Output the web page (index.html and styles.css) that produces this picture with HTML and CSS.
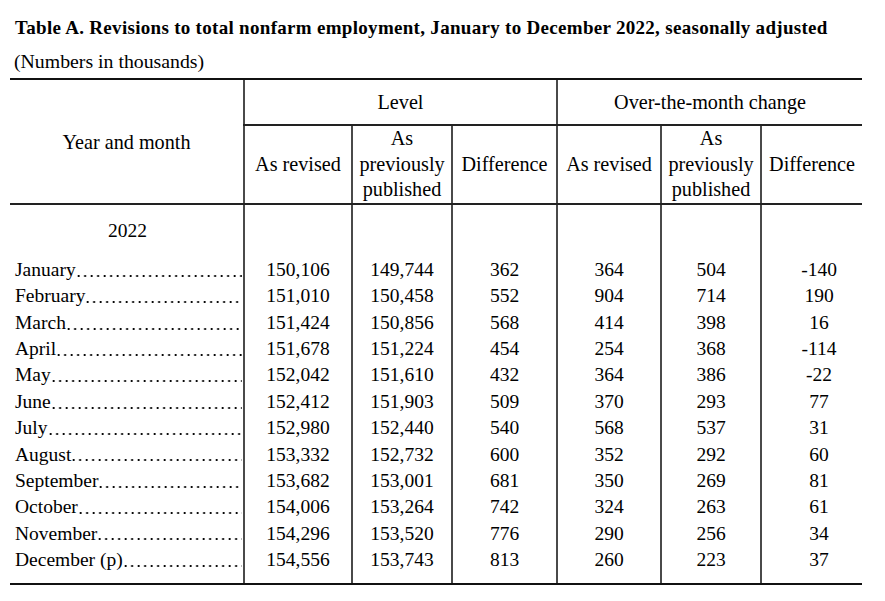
FILE: index.html
```html
<!DOCTYPE html>
<html>
<head>
<meta charset="utf-8">
<link rel="stylesheet" href="styles.css">
</head>
<body>
<div class="page">
  <h1 class="title">Table A. Revisions to total nonfarm employment, January to December 2022, seasonally adjusted</h1>
  <p class="sub">(Numbers in thousands)</p>
  <table class="data">
    <colgroup>
      <col class="c-month"><col class="c-a"><col class="c-b"><col class="c-c"><col class="c-d"><col class="c-e"><col class="c-f">
    </colgroup>
    <thead>
      <tr class="h1">
        <th rowspan="2" class="first ym">Year and month</th>
        <th colspan="3">Level</th>
        <th colspan="3">Over-the-month change</th>
      </tr>
      <tr class="h2">
        <th>As revised</th>
        <th>As<br>previously<br>published</th>
        <th>Difference</th>
        <th>As revised</th>
        <th>As<br>previously<br>published</th>
        <th>Difference</th>
      </tr>
    </thead>
    <tbody>
      <tr class="year"><td class="first yr">2022</td><td></td><td></td><td></td><td></td><td></td><td></td></tr>
      <tr><td class="first"><div class="lead"><span>January</span><span class="dots"></span></div></td><td>150,106</td><td>149,744</td><td>362</td><td>364</td><td>504</td><td class="diff">-140</td></tr>
      <tr><td class="first"><div class="lead"><span>February</span><span class="dots"></span></div></td><td>151,010</td><td>150,458</td><td>552</td><td>904</td><td>714</td><td class="diff">190</td></tr>
      <tr><td class="first"><div class="lead"><span>March</span><span class="dots"></span></div></td><td>151,424</td><td>150,856</td><td>568</td><td>414</td><td>398</td><td class="diff">16</td></tr>
      <tr><td class="first"><div class="lead"><span>April</span><span class="dots"></span></div></td><td>151,678</td><td>151,224</td><td>454</td><td>254</td><td>368</td><td class="diff">-114</td></tr>
      <tr><td class="first"><div class="lead"><span>May</span><span class="dots"></span></div></td><td>152,042</td><td>151,610</td><td>432</td><td>364</td><td>386</td><td class="diff">-22</td></tr>
      <tr><td class="first"><div class="lead"><span>June</span><span class="dots"></span></div></td><td>152,412</td><td>151,903</td><td>509</td><td>370</td><td>293</td><td class="diff">77</td></tr>
      <tr><td class="first"><div class="lead"><span>July</span><span class="dots"></span></div></td><td>152,980</td><td>152,440</td><td>540</td><td>568</td><td>537</td><td class="diff">31</td></tr>
      <tr><td class="first"><div class="lead"><span>August</span><span class="dots"></span></div></td><td>153,332</td><td>152,732</td><td>600</td><td>352</td><td>292</td><td class="diff">60</td></tr>
      <tr><td class="first"><div class="lead"><span>September</span><span class="dots"></span></div></td><td>153,682</td><td>153,001</td><td>681</td><td>350</td><td>269</td><td class="diff">81</td></tr>
      <tr><td class="first"><div class="lead"><span>October</span><span class="dots"></span></div></td><td>154,006</td><td>153,264</td><td>742</td><td>324</td><td>263</td><td class="diff">61</td></tr>
      <tr><td class="first"><div class="lead"><span>November</span><span class="dots"></span></div></td><td>154,296</td><td>153,520</td><td>776</td><td>290</td><td>256</td><td class="diff">34</td></tr>
      <tr class="last"><td class="first"><div class="lead"><span>December (p)</span><span class="dots"></span></div></td><td>154,556</td><td>153,743</td><td>813</td><td>260</td><td>223</td><td class="diff">37</td></tr>
    </tbody>
  </table>
</div>
</body>
</html>
```

FILE: styles.css
```css
html, body {
  margin: 0;
  padding: 0;
  background: #ffffff;
}

body {
  font-family: "Liberation Serif", "Times New Roman", serif;
  color: #000000;
}

.page {
  padding: 16px 0 0 10px;
}

.title {
  margin: 0 0 0 5px;
  font-size: 19px;
  font-weight: bold;
  letter-spacing: 0.3px;
  line-height: 24px;
  white-space: nowrap;
}

.sub {
  margin: 9px 0 5px 4px;
  font-size: 19.8px;
  line-height: 24px;
}

.data {
  border-collapse: collapse;
  table-layout: fixed;
  width: 852px;
  font-size: 19.5px;
}

.c-month { width: 234px; }
.c-a { width: 108px; }
.c-b { width: 100px; }
.c-c { width: 105px; }
.c-d { width: 104px; }
.c-e { width: 100px; }
.c-f { width: 101px; }

.data th,
.data td {
  padding: 0;
  font-weight: normal;
  text-align: center;
  border-left: 2px solid #4a4a4a;
  white-space: nowrap;
}

.data th {
  font-size: 20.2px;
}

.data .first {
  border-left: none;
}

.h1 th {
  border-top: 2px solid #111111;
  border-bottom: 2px solid #222222;
  height: 44px;
  line-height: 24px;
}

.data th.ym {
  border-bottom: 2px solid #222222;
  vertical-align: middle;
  padding-bottom: 0;
}

.h2 th {
  border-bottom: 2px solid #222222;
  height: 77px;
  line-height: 25.5px;
}

.year td {
  height: 52px;
  line-height: 26px;
}

.data td.yr {
  padding-left: 2px;
}

.data tbody tr:not(.year) td {
  line-height: 26.36px;
  height: 26.36px;
}

.data td.diff {
  padding-left: 14px;
}

.data tr.last td {
  padding-bottom: 10px;
  border-bottom: 2px solid #111111;
}

.lead {
  display: flex;
  padding-left: 5px;
  padding-right: 1px;
  white-space: nowrap;
}

.lead .dots {
  flex: 1;
  min-width: 0;
  align-self: flex-end;
  height: 4px;
  margin-bottom: 5.5px;
  margin-left: 1px;
  background-image: radial-gradient(circle at 1.5px 2px, #000000 0.85px, rgba(0, 0, 0, 0) 1.25px);
  background-size: 6.5px 4px;
  background-repeat: repeat-x;
  background-position: left top;
}
```
